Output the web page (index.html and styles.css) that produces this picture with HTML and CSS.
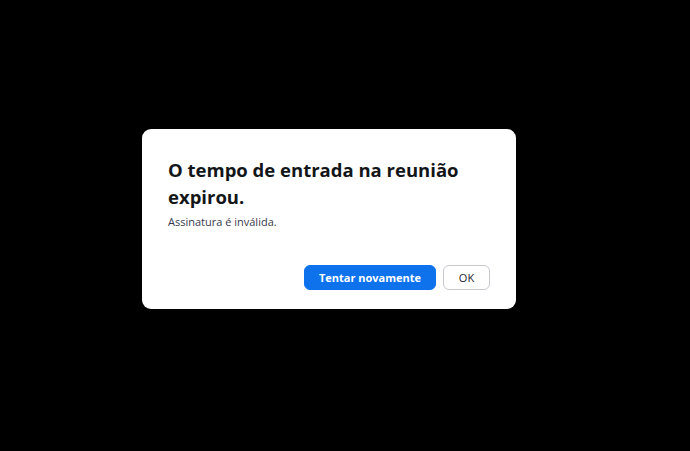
FILE: index.html
```html
<!DOCTYPE html>
<html lang="pt">
<head>
    <meta charset="UTF-8">
    <meta name="viewport" content="width=device-width, initial-scale=1.0">
    <title>Reunião expirou</title>
    <link rel="stylesheet" href="styles.css">
</head>
<body>
    <div class="overlay">
        <!-- Caixa de diálogo -->
        <div class="dialog">
            <h2 class="dialog-title">O tempo de entrada na reunião expirou.</h2>
            <p class="dialog-text">Assinatura é inválida.</p>
            <div class="dialog-actions">
                <button class="btn btn-primary">Tentar novamente</button>
                <button class="btn btn-default">OK</button>
            </div>
        </div>
    </div>
</body>
</html>
```

FILE: styles.css
```css
html, body {
    margin: 0;
    height: 100%;
    background-color: #000;
}
body {
    font-family: "Open Sans", "Noto Sans", Arial, sans-serif;
}
.overlay {
    height: 100%;
    display: flex;
    align-items: center;
    justify-content: center;
}
.dialog {
    width: 374px;
    box-sizing: border-box;
    background-color: #fff;
    border-radius: 9px;
    padding: 27px 26px 19px 26px;
    margin-top: -13px;
    margin-right: 32px;
}
.dialog-title {
    margin: 0;
    font-size: 18.5px;
    line-height: 27px;
    font-weight: 700;
    color: #131619;
}
.dialog-text {
    margin: 4px 0 0 0;
    font-size: 11px;
    line-height: 16px;
    color: #39394d;
}
.dialog-actions {
    display: flex;
    justify-content: flex-end;
    gap: 7px;
    margin-top: 35px;
}
.btn {
    font-family: inherit;
    font-size: 11px;
    height: 25px;
    border-radius: 6px;
    padding: 0;
    white-space: nowrap;
    cursor: pointer;
}
.btn-primary {
    background-color: #0e72ed;
    border: 1px solid #0e72ed;
    color: #fff;
    font-weight: 700;
    width: 132px;
}
.btn-default {
    background-color: #fff;
    border: 1px solid #c8c8d0;
    color: #232333;
    width: 47px;
}
```
